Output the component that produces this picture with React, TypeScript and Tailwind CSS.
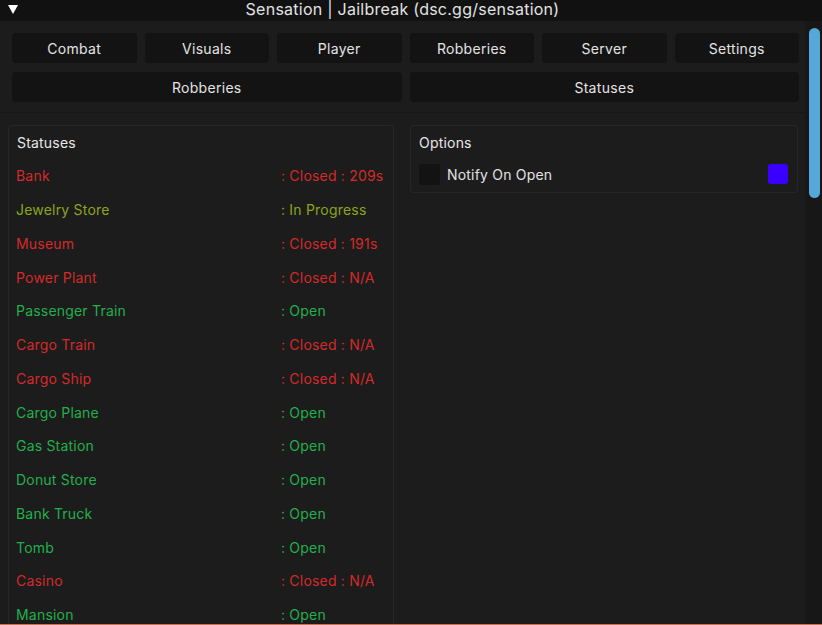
import React from "react";

const TABS = ["Combat", "Visuals", "Player", "Robberies", "Server", "Settings"];
const SUBTABS = ["Robberies", "Statuses"];

const RED = "text-[#d42a2a]";
const GREEN = "text-[#22b04c]";
const YELLOW = "text-[#8ca51c]";

const STATUSES = [
  { name: "Bank", status: ": Closed : 209s", color: RED },
  { name: "Jewelry Store", status: ": In Progress", color: YELLOW },
  { name: "Museum", status: ": Closed : 191s", color: RED },
  { name: "Power Plant", status: ": Closed : N/A", color: RED },
  { name: "Passenger Train", status: ": Open", color: GREEN },
  { name: "Cargo Train", status: ": Closed : N/A", color: RED },
  { name: "Cargo Ship", status: ": Closed : N/A", color: RED },
  { name: "Cargo Plane", status: ": Open", color: GREEN },
  { name: "Gas Station", status: ": Open", color: GREEN },
  { name: "Donut Store", status: ": Open", color: GREEN },
  { name: "Bank Truck", status: ": Open", color: GREEN },
  { name: "Tomb", status: ": Open", color: GREEN },
  { name: "Casino", status: ": Closed : N/A", color: RED },
  { name: "Mansion", status: ": Open", color: GREEN },
];

function TabButton({ label }: { label: string }) {
  return (
    <button className="h-[30px] flex-1 rounded-[4px] bg-[#131313] text-[14px] tracking-[0.3px] text-[#e4e4e4]">
      {label}
    </button>
  );
}

export default function App() {
  return (
    <div className="h-[625px] w-[822px] overflow-hidden bg-[#1c1c1c] font-['Inter',sans-serif] flex flex-col">
      {/* title bar */}
      <div className="relative h-[21px] shrink-0 bg-[#111111] flex items-center justify-center pr-[17px] pb-[3px]">
        <svg className="absolute left-[8px] top-[5px]" width="10" height="9" viewBox="0 0 10 9">
          <polygon points="0,0 10,0 5,9" fill="#ffffff" />
        </svg>
        <span className="text-[16px] tracking-[0.25px] text-[#e2e2e2] leading-none">Sensation | Jailbreak (dsc.gg/sensation)</span>
      </div>

      <div className="flex flex-1 min-h-0">
        <div className="flex-1 min-w-0 flex flex-col">
          {/* tabs */}
          <div className="pl-[12px] pr-[6px] pt-[12px] pb-[10px] flex flex-col gap-[9px] border-b border-[#161616]">
            <div className="flex gap-[8px]">
              {TABS.map(t => <TabButton key={t} label={t} />)}
            </div>
            <div className="flex gap-[8px]">
              {SUBTABS.map(t => <TabButton key={t} label={t} />)}
            </div>
          </div>

          {/* panels */}
          <div className="flex gap-[16px] pl-[8px] pr-[7px] pt-[12px] items-start tracking-[0.2px]">
            <div className="w-[386px] shrink-0 rounded-[4px] border border-[#272727] pb-[10px]">
              <div className="h-[33px] flex items-center pl-[8px] text-[14px] text-[#e8e8e8]">Statuses</div>
              {STATUSES.map(s => (
                <div key={s.name} className={`h-[33.75px] grid grid-cols-[265px_1fr] items-center pl-[7px] text-[14px] ${s.color}`}>
                  <span>{s.name}</span>
                  <span>{s.status}</span>
                </div>
              ))}
            </div>

            <div className="flex-1 rounded-[4px] border border-[#272727] pb-[3px]">
              <div className="h-[33px] flex items-center pl-[8px] text-[14px] text-[#e8e8e8]">Options</div>
              <div className="h-[30px] flex items-center pl-[8px] pr-[9px]">
                <div className="w-[21px] h-[21px] rounded-[3px] bg-[#131313]" />
                <span className="ml-[7px] text-[14px] text-[#e2e2e2]">Notify On Open</span>
                <div className="ml-auto w-[20px] h-[20px] rounded-[3px] bg-[#3a00ff]" />
              </div>
            </div>
          </div>
        </div>

        {/* scrollbar */}
        <div className="w-[17px] shrink-0 bg-[#171717] pt-[7px] pl-[4px]">
          <div className="w-[11px] h-[170px] rounded-full bg-[#56a8d8]" />
        </div>
      </div>
      <div className="h-[1px] shrink-0 bg-[#c8704f]" />
    </div>
  );
}
